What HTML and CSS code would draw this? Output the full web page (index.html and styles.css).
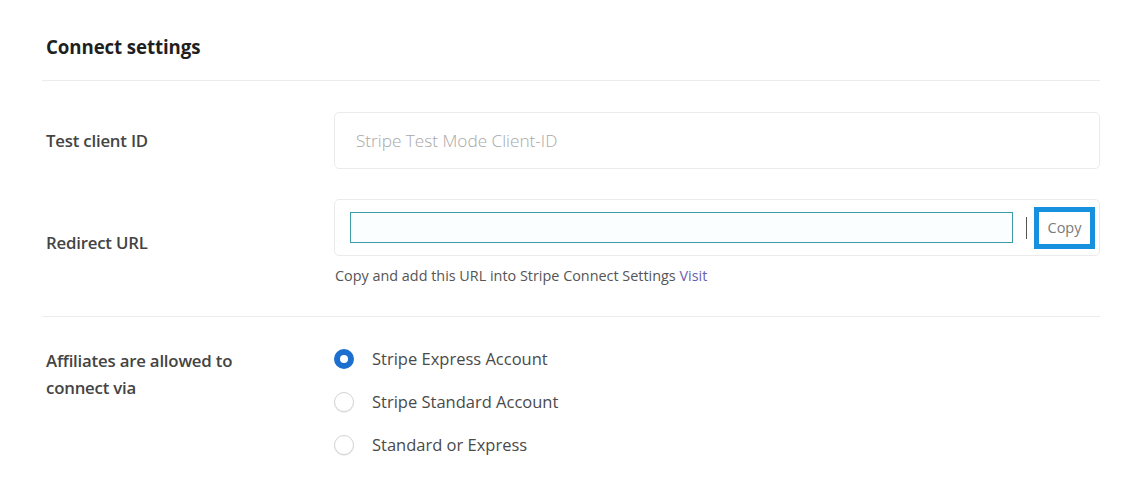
FILE: index.html
```html
<!DOCTYPE html>
<html lang="en">
<head>
<meta charset="utf-8">
<title>Connect settings</title>
<link rel="stylesheet" href="styles.css">
</head>
<body>
<div class="panel">
  <h2 class="title">Connect settings</h2>
  <div class="divider"></div>

  <div class="row row-first">
    <div class="label">Test client ID</div>
    <div class="field">
      <div class="box">
        <input class="plain-input" type="text" placeholder="Stripe Test Mode Client-ID">
      </div>
    </div>
  </div>

  <div class="row row-second">
    <div class="label label-mid">Redirect URL</div>
    <div class="field">
      <div class="box box-url">
        <input class="url-input" type="text" value="">
        <span class="sep"></span>
        <button class="copy-btn" type="button">Copy</button>
      </div>
      <p class="help">Copy and add this URL into Stripe Connect Settings <a class="visit" href="#">Visit</a></p>
    </div>
  </div>

  <div class="divider divider-2"></div>

  <div class="row row-radios">
    <div class="label label-multi">Affiliates are allowed to<br>connect via</div>
    <div class="field radios">
      <label class="radio"><span class="dot checked"></span><span class="rtext">Stripe Express Account</span></label>
      <label class="radio"><span class="dot"></span><span class="rtext">Stripe Standard Account</span></label>
      <label class="radio"><span class="dot"></span><span class="rtext">Standard or Express</span></label>
    </div>
  </div>
</div>
</body>
</html>
```

FILE: styles.css
```css
* { box-sizing: border-box; }
html, body { margin: 0; padding: 0; background: #fff; }
body {
  font-family: "Open Sans", "Noto Sans", "Liberation Sans", sans-serif;
  color: #3c3c3c;
}
.panel {
  width: 1058px;
  margin-left: 42px;
  padding-top: 34px;
}
.title {
  margin: 0;
  padding-left: 4px;
  font-size: 18.7px;
  line-height: 26px;
  font-weight: 700;
  color: #1f1f1f;
  letter-spacing: -0.1px;
}
.divider {
  height: 1px;
  background: #ececec;
  margin-top: 20px;
}
.row {
  display: flex;
}
.row-first { margin-top: 31px; }
.row-second { margin-top: 30px; align-items: center; }
.label {
  width: 292px;
  flex: none;
  padding-left: 4px;
  font-size: 16.8px;
  font-weight: 600;
  color: #444;
  letter-spacing: -0.2px;
}
.row-first .label {
  line-height: 57px;
}
.label-mid {
  line-height: 26px;
  padding-top: 1px;
}
.field { flex: 1; }
.box {
  height: 57px;
  border: 1px solid #ebebeb;
  border-radius: 5px;
  display: flex;
  align-items: center;
}
.plain-input {
  border: 0;
  outline: 0;
  background: transparent;
  width: 100%;
  padding: 0 0 0 21px;
  font-family: "Open Sans", "Noto Sans", sans-serif;
  font-size: 17.2px;
  font-weight: 300;
  color: #444;
}
.plain-input::placeholder { color: #a8a8a8; }
.box-url {
  padding: 0 4px 0 15px;
}
.url-input {
  flex: 1;
  height: 31px;
  border: 1px solid #3d9ca6;
  background: #fbfefe;
  outline: 0;
  padding: 0 8px;
}
.sep {
  width: 1px;
  height: 22px;
  background: #555;
  margin: 0 7px 0 13px;
}
.copy-btn {
  width: 61px;
  height: 42px;
  border: 5px solid #1791dd;
  background: #fff;
  font-family: "Open Sans", "Noto Sans", sans-serif;
  font-size: 14.5px;
  color: #7a7a7a;
  padding: 0;
  cursor: pointer;
}
.help {
  margin: 10px 0 0 1px;
  font-size: 14.4px;
  line-height: 20px;
  color: #555;
}
.visit {
  color: #6a5fb3;
  text-decoration: none;
}
.divider-2 { margin-top: 30px; }
.row-radios { margin-top: 30px; }
.label-multi {
  line-height: 27px;
}
.radios {
  display: flex;
  flex-direction: column;
  gap: 18px;
  margin-top: -1px;
}
.radio {
  display: flex;
  align-items: center;
  height: 25px;
  font-size: 16.5px;
  font-weight: 400;
  color: #4a4a4a;
}
.dot {
  width: 20px;
  height: 20px;
  border-radius: 50%;
  border: 1px solid #d4d4d4;
  box-shadow: 0 1px 1px rgba(0,0,0,0.08);
  margin-right: 18px;
  flex: none;
  background: #fff;
}
.dot.checked {
  border: 6px solid #1c6fcf;
  background: #fff;
  box-shadow: none;
}
.rtext { display: inline-block; }
```
